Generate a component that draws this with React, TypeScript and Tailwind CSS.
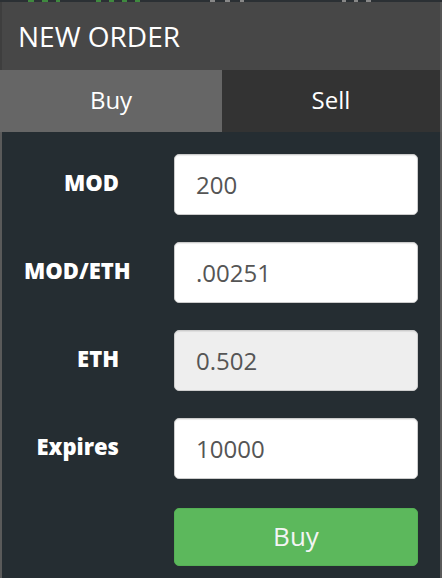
import React from "react";

const font = { fontFamily: '"Open Sans", "Noto Sans", sans-serif' };

function Frag({ w, c }: { w: string; c: string }) {
  return <span className={`h-[2px] ${w} ${c}`} />;
}

function Row({ label, value, disabled }: { label: string; value: string; disabled?: boolean }) {
  return (
    <div className="flex items-center">
      <div className="ml-[22px] w-[95px] whitespace-nowrap pb-[5px] text-right text-[22px] font-extrabold text-white">{label}</div>
      <div
        className={`ml-[55px] flex h-[61px] w-[244px] items-center rounded-[5px] border border-[#cccccc] px-[21px] text-[24px] font-medium text-[#555555] shadow-[inset_0_1px_1px_rgba(0,0,0,0.075)] ${
          disabled ? "bg-[#eeeeee]" : "bg-white"
        }`}
      >
        {value}
      </div>
    </div>
  );
}

export default function App() {
  return (
    <div className="flex h-[578px] w-[442px] flex-col bg-[#252d32]" style={font}>
      <div className="flex h-[2px] items-start bg-[#2b3034]">
        <div className="ml-[28px] flex gap-[8px]">
          <Frag w="w-[6px]" c="bg-[#3f8a3f]" />
          <Frag w="w-[6px]" c="bg-[#3f8a3f]" />
          <Frag w="w-[4px]" c="bg-[#3f8a3f]" />
        </div>
        <div className="ml-[36px] flex gap-[8px]">
          <Frag w="w-[5px]" c="bg-[#3f8a3f]" />
          <Frag w="w-[5px]" c="bg-[#3f8a3f]" />
          <Frag w="w-[5px]" c="bg-[#3f8a3f]" />
          <Frag w="w-[5px]" c="bg-[#3f8a3f]" />
        </div>
        <div className="ml-[70px] flex gap-[10px]">
          <Frag w="w-[5px]" c="bg-[#888888]" />
          <Frag w="w-[5px]" c="bg-[#888888]" />
          <Frag w="w-[4px]" c="bg-[#888888]" />
        </div>
        <div className="ml-[98px] flex gap-[8px]">
          <Frag w="w-[4px]" c="bg-[#888888]" />
          <Frag w="w-[4px]" c="bg-[#888888]" />
          <Frag w="w-[5px]" c="bg-[#888888]" />
        </div>
      </div>
      <div className="flex h-[68px] items-center border-l-2 border-r-2 border-l-[#3e3e3e] border-r-[#555555] bg-[#474747] pl-[16px] text-[28px] font-medium text-white">
        NEW ORDER
      </div>
      <div className="flex h-[62px]">
        <div className="flex w-[222px] items-center justify-center bg-[#666666] pb-[2px] text-[24px] font-medium text-white">Buy</div>
        <div className="flex flex-1 items-center justify-center border-r-2 border-r-[#5e5e5e] bg-[#333333] pb-[2px] text-[24px] font-medium text-white">
          Sell
        </div>
      </div>
      <div className="flex flex-1 flex-col gap-[27px] border-l-2 border-r-2 border-[#5a5a5a] pt-[22px]">
        <Row label="MOD" value="200" />
        <Row label="MOD/ETH" value=".00251" />
        <Row label="ETH" value="0.502" disabled />
        <Row label="Expires" value="10000" />
        <div className="ml-[172px] mt-[2px] flex h-[58px] w-[244px] items-center justify-center rounded-[5px] border border-[#55b055] bg-[#5cb85c] pb-[2px] text-[26px] font-medium text-[#f4f4f4]">
          Buy
        </div>
      </div>
    </div>
  );
}
